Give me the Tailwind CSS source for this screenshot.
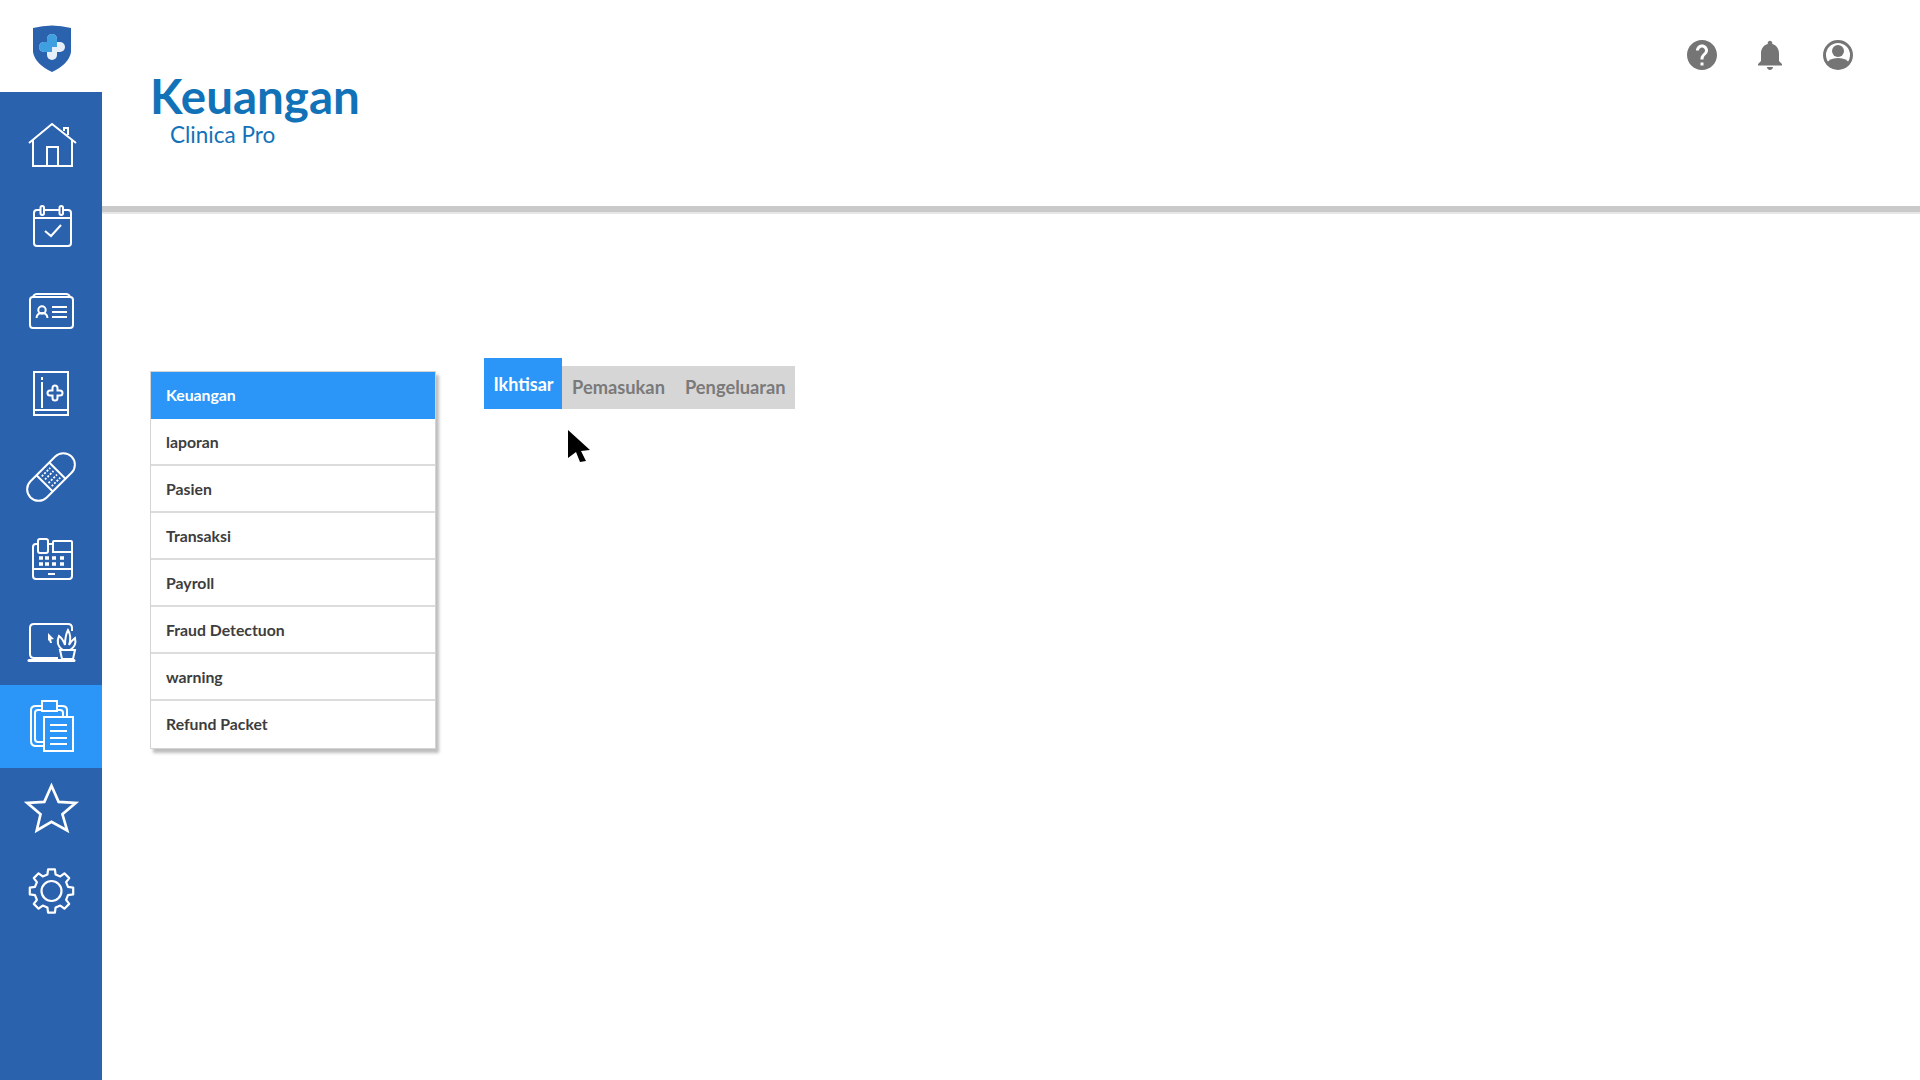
<!DOCTYPE html>
<html lang="id">
<head>
  <meta charset="UTF-8">
  <title>Keuangan - Clinica Pro</title>
  <script src="https://cdn.jsdelivr.net/npm/@tailwindcss/browser@4"></script>
</head>
<body class="bg-white font-['Lato','Open_Sans',sans-serif]">
  <div class="relative flex h-[1080px] w-[1920px] overflow-hidden">

    <!-- sidebar -->
    <aside class="flex w-[102px] shrink-0 flex-col">
      <div class="flex h-[92px] items-start justify-center pt-[24px]">
        <svg class="ml-[2px] h-[49px] w-[40px]" viewBox="0 0 40 49">
          <path d="M1 4 Q20 -1 39 4 V28 Q37 40 20 48 Q3 40 1 28 Z" fill="#2b62ae"/>
          <rect x="15" y="10" width="10" height="26" rx="5" fill="#e6eef7"/>
          <rect x="7" y="18" width="26" height="10" rx="5" fill="#e6eef7"/>
          <path d="M15 18 V15 a5 5 0 0 1 10 0 V23 H20 V28 H12 a5 5 0 0 1 0 -10 Z" fill="#3f9fe0"/>
        </svg>
      </div>
      <nav class="flex flex-1 flex-col bg-[#2b62ae] pt-[12px]">
        <a class="flex h-[83px] items-center justify-center">
          <svg class="h-[60px] w-[60px]" viewBox="0 0 60 60" fill="none" stroke="white" stroke-width="2">
            <path d="M8 27 L31 8 L55 27"/><path d="M12 24 V50 H51 V24"/><path d="M26 50 V31 H37 V50"/><path d="M43 15 V12 H47 V19"/>
          </svg>
        </a>
        <a class="flex h-[83px] items-center justify-center">
          <svg class="h-[60px] w-[60px]" viewBox="0 2 60 60" fill="none" stroke="white" stroke-width="2">
            <rect x="13" y="13" width="37" height="36" rx="3"/><path d="M13 21 H50"/>
            <rect x="19.5" y="9" width="3.5" height="9" rx="1.7" fill="#2b62ae"/><rect x="38.5" y="9" width="3.5" height="9" rx="1.7" fill="#2b62ae"/>
            <path d="M24 34 L30 39 L40 28"/>
          </svg>
        </a>
        <a class="flex h-[83px] items-center justify-center">
          <svg class="h-[60px] w-[60px]" viewBox="0 1 60 60" fill="none" stroke="white" stroke-width="2">
            <rect x="9" y="16" width="43" height="31" rx="3"/><path d="M12 16 Q13 13 16 13 H45 Q48 13 49 16"/>
            <circle cx="21" cy="29" r="3.7"/><path d="M15.5 37 Q16 32 21 32 Q26 32 26.5 37"/>
            <path d="M31 26 H46 M31 31 H46 M31 36 H46"/>
          </svg>
        </a>
        <a class="flex h-[83px] items-center justify-center">
          <svg class="h-[60px] w-[60px]" viewBox="0 2 60 60" fill="none" stroke="white" stroke-width="2">
            <rect x="13" y="9" width="34" height="43" /><path d="M13 47 H47 M21 19 V45 M21 14 V17"/>
            <path d="M31.5 25 a2.5 2.5 0 0 1 5 0 V27.5 H39 a2.5 2.5 0 0 1 0 5 H36.5 V35 a2.5 2.5 0 0 1 -5 0 V32.5 H29 a2.5 2.5 0 0 1 0 -5 H31.5 Z"/>
          </svg>
        </a>
        <a class="flex h-[83px] items-center justify-center">
          <svg class="h-[60px] w-[60px]" viewBox="0 1 60 60" fill="none" stroke="white" stroke-width="2">
            <g transform="rotate(-45 30 30)">
              <rect x="1" y="18.5" width="58" height="23" rx="11.5"/>
              <path d="M21 18.5 V41.5 M39 18.5 V41.5"/>
              <path d="M24 23 H36 M24 27.5 H36 M24 32.5 H36 M24 37 H36" stroke-dasharray="2 1.5" stroke-width="1.8"/>
            </g>
          </svg>
        </a>
        <a class="flex h-[83px] items-center justify-center">
          <svg class="h-[60px] w-[60px]" viewBox="0 2 60 60" fill="none" stroke="white" stroke-width="2">
            <path d="M17 15 H15 Q12 15 12 18 V47 Q12 50 15 50 H48 Q51 50 51 47 V23 H32 V15 H27"/>
            <rect x="17" y="10" width="10" height="14" rx="2"/><rect x="32" y="12" width="19" height="11" rx="1"/>
            <path d="M12 40 H51"/><path d="M27 45 H34"/>
            <path d="M18 29 H22 M24 29 H28 M31 29 H35 M39 29 H43 M18 35 H22 M24 35 H28 M31 35 H35 M39 35 H43" stroke-width="3.5"/>
          </svg>
        </a>
        <a class="flex h-[83px] items-center justify-center">
          <svg class="h-[60px] w-[60px]" viewBox="0 2 60 60" fill="none" stroke="white" stroke-width="2">
            <path d="M36 46 H13 Q9 46 9 42 V16 Q9 12 13 12 H47 Q51 12 51 16 V19"/>
            <path d="M8 48.5 H53" stroke-width="3" stroke-linecap="round"/>
            <path d="M25 46 H37"/>
            <path d="M27 21 L33 27 L30 27.5 L31 31 L29 31 L28 28 L27 29 Z" fill="white" stroke="none"/>
            <path d="M42 38 Q34 33 38 24 Q42 27 44 33 Q44 24 47 18 Q51 25 48 33 Q50 29 54 26 Q56 34 49 38 Z"/>
            <path d="M39 38 H54 L52 47 H41 Z"/>
          </svg>
        </a>
        <a class="flex h-[83px] items-center justify-center bg-[#2b96f7]">
          <svg class="h-[60px] w-[60px]" viewBox="0 0 60 60" fill="none" stroke="white" stroke-width="2">
            <path d="M23 49 H15 Q10 49 10 44 V13 Q10 9 15 9 H41 Q46 9 46 13 V20"/>
            <path d="M23 45 H17 Q14 45 14 42 V16 Q14 13 17 13 H21 M36 13 H39 Q42 13 42 16 V20"/>
            <rect x="21" y="4" width="15" height="10" fill="#2b96f7"/>
            <rect x="23" y="20" width="29" height="34" fill="#2b96f7"/>
            <path d="M29 28 H46 M29 34 H46 M29 41 H46 M29 47 H46"/>
          </svg>
        </a>
        <a class="flex h-[83px] items-center justify-center">
          <svg class="h-[60px] w-[60px]" viewBox="-1.5 -1 63 63" fill="none" stroke="white" stroke-width="2.8">
            <path d="M30.5 5 L38 22 L56 23 L42 35 L47 52 L30.5 43 L15 52 L19 35 L5 23 L23 22 Z"/>
          </svg>
        </a>
        <a class="flex h-[83px] items-center justify-center">
          <svg class="h-[60px] w-[60px]" viewBox="0 2 60 60" fill="none" stroke="white" stroke-width="2.2" stroke-linejoin="round">
            <g transform="translate(30.5 30)">
              <path d="M-4.1 -16.5 L-3.4 -21.7 L3.4 -21.7 L4.1 -16.5 L8.8 -14.6 L12.9 -17.7 L17.7 -12.9 L14.6 -8.8 L16.5 -4.1 L21.7 -3.4 L21.7 3.4 L16.5 4.1 L14.6 8.8 L17.7 12.9 L12.9 17.7 L8.8 14.6 L4.1 16.5 L3.4 21.7 L-3.4 21.7 L-4.1 16.5 L-8.8 14.6 L-12.9 17.7 L-17.7 12.9 L-14.6 8.8 L-16.5 4.1 L-21.7 3.4 L-21.7 -3.4 L-16.5 -4.1 L-14.6 -8.8 L-17.7 -12.9 L-12.9 -17.7 L-8.8 -14.6 Z"/>
              <circle r="10"/>
            </g>
          </svg>
        </a>
      </nav>
    </aside>

    <main class="flex-1">
      <!-- header -->
      <header class="flex h-[212px] items-start justify-between border-b-[6px] border-[#c9c9c9] pl-[48px] pr-[64px]">
        <div class="pt-[68px]">
          <h1 class="text-[47.5px] leading-[56px] font-bold text-[#1272b8]">Keuangan</h1>
          <p class="pl-[20px] text-[22.5px] leading-[22px] text-[#1272b8]">Clinica Pro</p>
        </div>
        <div class="flex items-center gap-[32px] pt-[37px] text-[#757575]">
          <svg class="h-[36px] w-[36px]" viewBox="0 0 24 24" fill="currentColor"><path d="M12 2C6.48 2 2 6.48 2 12s4.48 10 10 10 10-4.48 10-10S17.52 2 12 2zm1 17h-2v-2h2v2zm2.07-7.75l-.9.92C13.45 12.9 13 13.5 13 15h-2v-.5c0-1.1.45-2.1 1.17-2.83l1.24-1.26c.37-.36.59-.86.59-1.41 0-1.1-.9-2-2-2s-2 .9-2 2H8c0-2.21 1.79-4 4-4s4 1.79 4 4c0 .88-.36 1.68-.93 2.25z"/></svg>
          <svg class="h-[36px] w-[36px]" viewBox="0 0 24 24" fill="currentColor"><path d="M12 22c1.1 0 2-.9 2-2h-4c0 1.1.89 2 2 2zm6-6v-5c0-3.07-1.64-5.64-4.5-6.32V4c0-.83-.67-1.5-1.5-1.5s-1.5.67-1.5 1.5v.68C7.63 5.36 6 7.92 6 11v5l-2 2v1h16v-1l-2-2z"/></svg>
          <svg class="h-[36px] w-[36px]" viewBox="0 0 36 36" fill="none"><circle cx="18" cy="18" r="13.5" stroke="currentColor" stroke-width="3"/><circle cx="18" cy="14" r="6" fill="currentColor"/><path d="M6 27 Q9 21 18 21 Q27 21 30 27 Q25 32 18 32 Q11 32 6 27 Z" fill="currentColor"/></svg>
        </div>
      </header>
      <div class="h-[2px] bg-[#e6e6e6]"></div>

      <section class="flex items-start gap-[48px] pl-[48px] pt-[157px]">
        <!-- menu list -->
        <ul class="w-[286px] border border-[#d4d4d4] text-[15.8px] font-bold text-[#3d3d3d] shadow-[3px_4px_3px_#bdbdbd]">
          <li class="flex h-[47px] items-center bg-[#2b96f7] pb-[1px] pl-[15px] text-white">Keuangan</li>
          <li class="flex h-[47px] items-center border-b-2 border-[#dcdcdc] pl-[15px]">laporan</li>
          <li class="flex h-[47px] items-center border-b-2 border-[#dcdcdc] pl-[15px]">Pasien</li>
          <li class="flex h-[47px] items-center border-b-2 border-[#dcdcdc] pl-[15px]">Transaksi</li>
          <li class="flex h-[47px] items-center border-b-2 border-[#dcdcdc] pl-[15px]">Payroll</li>
          <li class="flex h-[47px] items-center border-b-2 border-[#dcdcdc] pl-[15px]">Fraud Detectuon</li>
          <li class="flex h-[47px] items-center border-b-2 border-[#dcdcdc] pl-[15px]">warning</li>
          <li class="flex h-[47px] items-center pb-[1px] pl-[15px]">Refund Packet</li>
        </ul>

        <!-- tabs -->
        <div class="-mt-[13px] flex items-end text-[18.3px] font-bold">
          <button class="flex h-[51px] w-[78px] items-center justify-center bg-[#2b96f7] pl-[1px] pt-[2px] text-[18px] text-white">Ikhtisar</button>
          <div class="flex h-[43px] w-[233px] items-center gap-[20px] bg-[#d6d6d6] pl-[10px] text-[#7a7a7a]">
            <span>Pemasukan</span>
            <span>Pengeluaran</span>
          </div>
        </div>
      </section>
    </main>

    <!-- mouse pointer -->
    <svg class="absolute left-[567px] top-[430px] h-[32px] w-[24px]" viewBox="0 0 24 32">
      <path d="M1 0 L23 20 L14 21 L19 31 L13 32 L9 22 L1 28 Z" fill="#000"/>
    </svg>
  </div>
</body>
</html>
